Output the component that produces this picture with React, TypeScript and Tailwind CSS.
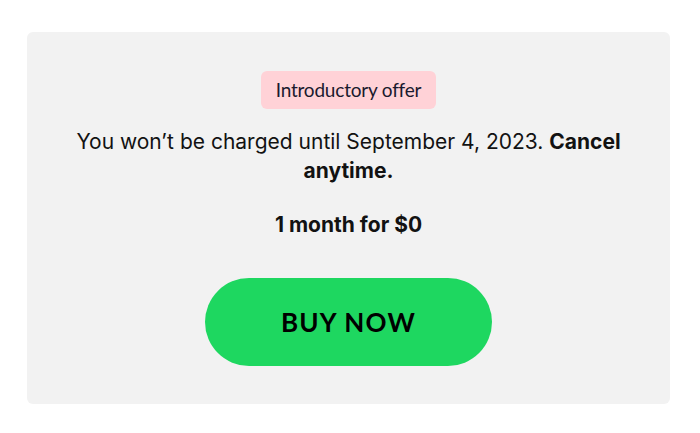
import React from "react";

const App = () => {
  return (
    <div className="min-h-screen w-[700px] bg-white pt-8 pl-[27px]">
      <div className="flex h-[372px] w-[643px] flex-col items-center rounded-md bg-[#f2f2f2] px-10 pt-[39px]">
        {/* Offer badge */}
        <div className="rounded-md bg-[#ffd2d7] px-[15px] py-[9px] font-['Lato',sans-serif] text-[19px] leading-[20px] tracking-[-0.2px] text-[#1a1a2e]">
          Introductory offer
        </div>

        <p className="mt-[18px] text-center font-['Inter',sans-serif] text-[21px] leading-[29px] text-[#121212]">
          You won’t be charged until September 4, 2023.{" "}
          <span className="font-bold">Cancel anytime.</span>
        </p>

        <p className="mt-[25px] font-['Inter',sans-serif] text-[21px] font-bold leading-[29px] text-[#121212]">
          1 month for $0
        </p>

        <button
          type="button"
          className="mt-[39px] flex h-[88px] w-[287px] items-center justify-center rounded-full bg-[#1ed760] font-['Lato',sans-serif] text-[26px] font-bold tracking-[1.2px] text-black"
        >
          BUY NOW
        </button>
      </div>
    </div>
  );
};

export default App;
